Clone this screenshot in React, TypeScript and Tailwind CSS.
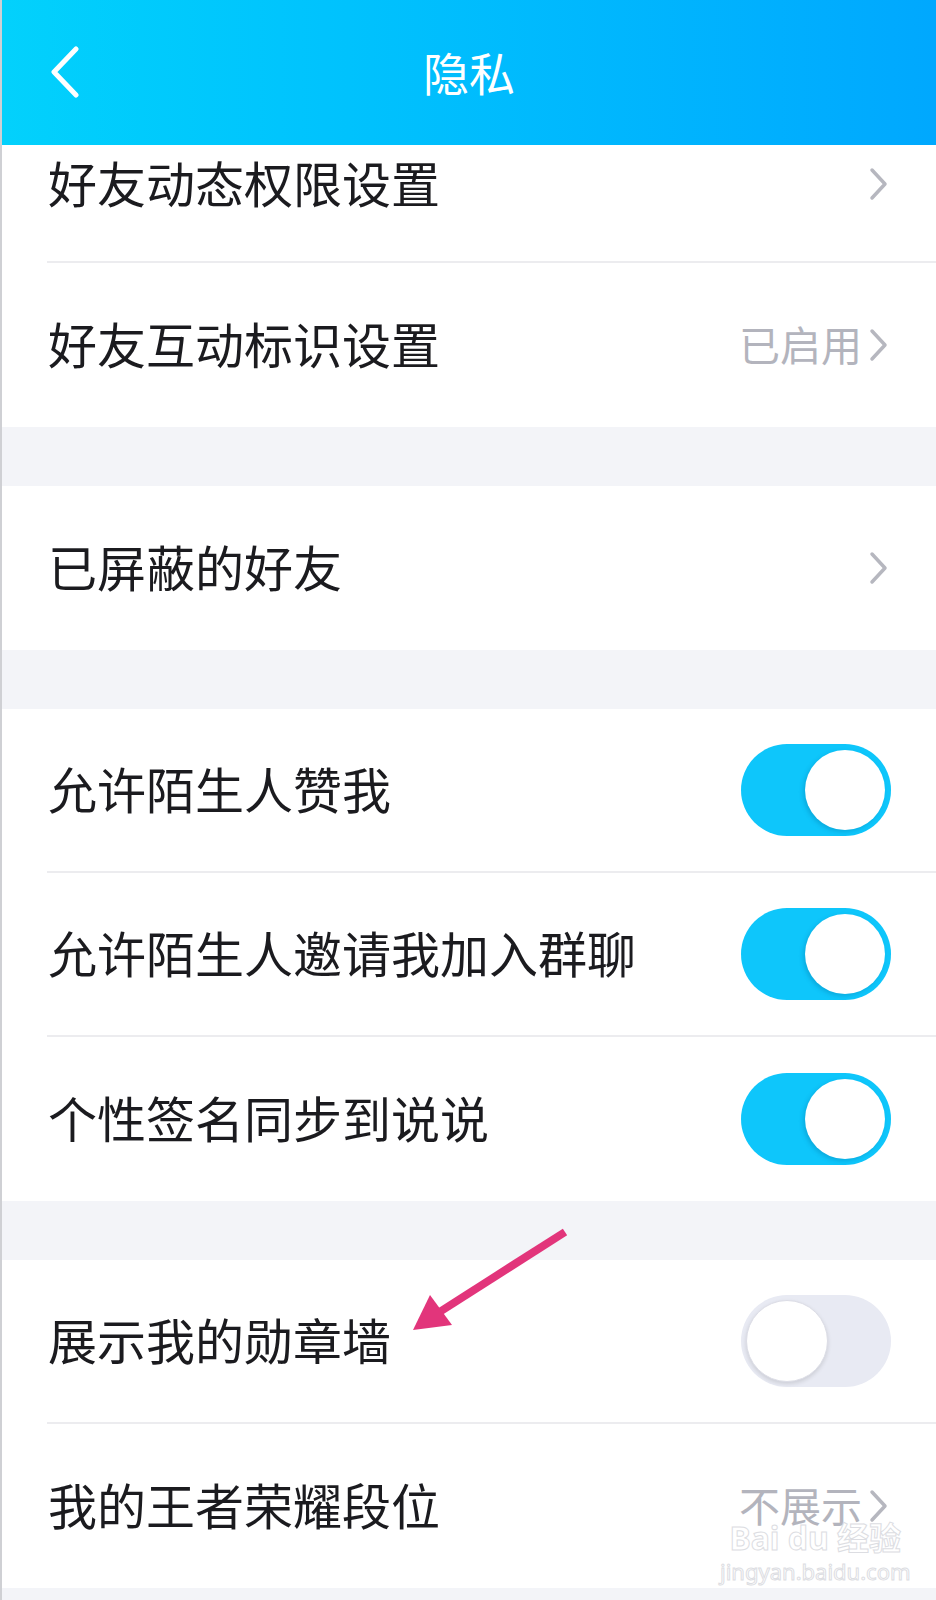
import React from 'react';

const font = { fontFamily: '"Noto Sans", "Noto Sans CJK SC", sans-serif' };

function Chevron() {
  return (
    <svg width="22" height="34" viewBox="0 0 22 34" className="shrink-0">
      <path d="M4 3 L17 17 L4 31" fill="none" stroke="#b6b7bf" strokeWidth="3.5" strokeLinecap="round" strokeLinejoin="round" />
    </svg>
  );
}

function Toggle({ on }: { on: boolean }) {
  return on ? (
    <div className="w-[150px] h-[92px] rounded-full bg-[#0ec6fb] flex items-center justify-end pr-[6px]">
      <div className="w-[80px] h-[80px] rounded-full bg-white shadow-[-2px_2px_4px_rgba(0,90,140,0.25)]" />
    </div>
  ) : (
    <div className="w-[150px] h-[92px] rounded-full bg-[#e8eaf3] flex items-center pl-[5px]">
      <div className="w-[82px] h-[82px] rounded-full bg-white border border-[#dcdde6] shadow-[0_2px_4px_rgba(0,0,0,0.12)]" />
    </div>
  );
}

function Row({ label, value, toggle, divider = true, first = false }: { label: string; value?: string; toggle?: boolean; divider?: boolean; first?: boolean }) {
  return (
    <div className="h-[164px] flex flex-col bg-white">
      <div className={`flex-1 flex items-center pl-[46px] pr-[46px] ${first ? 'pt-[8px]' : ''}`}>
        <div className="flex-1 text-[49px] leading-none text-[#1b1b1f]">{label}</div>
        {toggle === undefined ? (
          <div className="flex items-center gap-[6px]">
            {value && <span className="text-[41px] leading-none text-[#b3b4bd]">{value}</span>}
            <Chevron />
          </div>
        ) : (
          <div className="mr-[-1px]">
            <Toggle on={toggle} />
          </div>
        )}
      </div>
      {divider && <div className="h-[2px] ml-[45px] bg-[#ececef]" />}
    </div>
  );
}

const Gap = () => <div className="h-[59px] bg-[#f3f4f8]" />;

export default function App() {
  return (
    <div className="w-[936px] h-[1600px] overflow-hidden relative bg-[#f3f4f8] border-l-2 border-[#cfd0d4]" style={font}>
      <div className="relative z-10 h-[145px] bg-gradient-to-r from-[#03d1fc] to-[#00a8fe] flex items-center justify-center">
        <svg width="40" height="52" viewBox="0 0 40 52" className="absolute left-[44px] top-[46px]">
          <path d="M30 3 L8 26 L30 49" fill="none" stroke="#fff" strokeWidth="5" strokeLinecap="round" strokeLinejoin="round" />
        </svg>
        <div className="text-[46px] leading-none text-white">隐私</div>
      </div>

      <div className="-mt-[46px]">
        <Row label="好友动态权限设置" first />
        <Row label="好友互动标识设置" value="已启用" divider={false} />
        <Gap />
        <Row label="已屏蔽的好友" divider={false} />
        <Gap />
        <Row label="允许陌生人赞我" toggle />
        <Row label="允许陌生人邀请我加入群聊" toggle />
        <Row label="个性签名同步到说说" toggle divider={false} />
        <Gap />
        <Row label="展示我的勋章墙" toggle={false} />
        <Row label="我的王者荣耀段位" value="不展示" divider={false} />
      </div>

      {/* annotation arrow */}
      <svg width="936" height="1600" className="absolute inset-0 pointer-events-none">
        <line x1="563" y1="1232" x2="436" y2="1313" stroke="#e2357b" strokeWidth="8" />
        <polygon points="411,1330 428,1295 450,1325" fill="#e2357b" />
      </svg>

      {/* watermark */}
      <div className="absolute left-[718px] top-[1522px] flex flex-col items-center pointer-events-none">
        <div className="text-[32px] leading-none font-bold text-transparent [-webkit-text-stroke:1px_#dcdde2]">Bai du 经验</div>
        <div className="text-[22px] leading-none mt-[6px] text-transparent [-webkit-text-stroke:1px_#dcdde2]">jingyan.baidu.com</div>
      </div>
    </div>
  );
}
